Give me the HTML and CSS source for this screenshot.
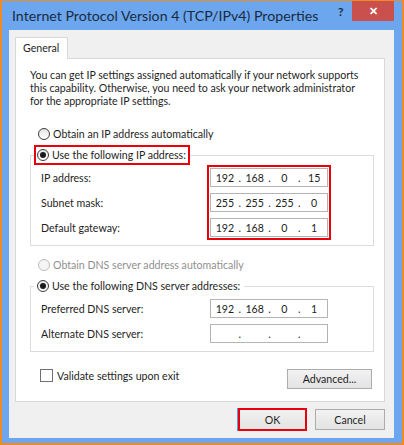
FILE: index.html
```html
<!DOCTYPE html>
<html lang="en">
<head>
  <meta charset="UTF-8" />
  <title>Internet Protocol Version 4 (TCP/IPv4) Properties</title>
  <link rel="stylesheet" href="styles.css">
</head>
<body>

  <div class="window">
    <div class="titlebar">
      <span class="title">Internet Protocol Version 4 (TCP/IPv4) Properties</span>
      <span class="help">?</span>
      <span class="close">&#x2715;</span>
    </div>

    <div class="dialog">
      <div class="tabs">
        <span class="tab">General</span>
      </div>

      <div class="panel">
        <p class="intro">You can get IP settings assigned automatically if your network supports<br>this capability. Otherwise, you need to ask your network administrator<br>for the appropriate IP settings.</p>

        <div class="option"><span class="radio"></span>Obtain an IP address automatically</div>

        <fieldset class="group">
          <legend class="legend mark"><span class="radio on"></span>Use the following IP address:</legend>
          <div class="rows">
            <div class="labels">
              <div class="label">IP address:</div>
              <div class="label">Subnet mask:</div>
              <div class="label">Default gateway:</div>
            </div>
            <div class="fields mark">
              <div class="ip"><span>192</span><i>.</i><span>168</span><i>.</i><span>0</span><i>.</i><span>15</span></div>
              <div class="ip"><span>255</span><i>.</i><span>255</span><i>.</i><span>255</span><i>.</i><span>0</span></div>
              <div class="ip"><span>192</span><i>.</i><span>168</span><i>.</i><span>0</span><i>.</i><span>1</span></div>
            </div>
          </div>
        </fieldset>

        <div class="option off"><span class="radio"></span>Obtain DNS server address automatically</div>

        <fieldset class="group">
          <legend class="legend"><span class="radio on"></span>Use the following DNS server addresses:</legend>
          <div class="rows">
            <div class="labels">
              <div class="label">Preferred DNS server:</div>
              <div class="label">Alternate DNS server:</div>
            </div>
            <div class="fields">
              <div class="ip"><span>192</span><i>.</i><span>168</span><i>.</i><span>0</span><i>.</i><span>1</span></div>
              <div class="ip"><span></span><i>.</i><span></span><i>.</i><span></span><i>.</i><span></span></div>
            </div>
          </div>
        </fieldset>

        <div class="footer-row">
          <label class="check"><span class="box"></span>Validate settings upon exit</label>
          <button class="btn advanced">Advanced...</button>
        </div>
      </div>

      <div class="actions">
        <button class="btn ok">OK</button>
        <button class="btn">Cancel</button>
      </div>
    </div>
  </div>

</body>
</html>
```

FILE: styles.css
```css
* {
  box-sizing: border-box;
}

body {
  margin: 0;
  font-family: Lato, 'Noto Sans', sans-serif;
  font-size: 10.6px;
  color: #1e1e1e;
}

.window {
  width: 404px;
  height: 445px;
  display: flex;
  flex-direction: column;
  background: #6ba6ee;
  border: 2px solid #f08a24;
  border-top-width: 1px;
  padding: 0 8px 5px 7px;
}

.titlebar {
  height: 29px;
  display: flex;
  align-items: flex-start;
}

.title {
  font-size: 14.2px;
  color: #1b2b3e;
  margin: 6px 0 0 3px;
  white-space: nowrap;
}

.help {
  margin: 3px 0 0 auto;
  font-size: 12px;
  font-weight: bold;
  color: #1b2b3e;
  width: 14px;
}

.close {
  width: 42px;
  height: 20px;
  background: #c9504c;
  color: #fff;
  font-size: 11px;
  font-weight: bold;
  display: flex;
  align-items: center;
  justify-content: center;
}

.dialog {
  flex: 1;
  background: #f0f0f0;
  padding: 7px 9px 6px 6px;
  display: flex;
  flex-direction: column;
}

.tabs {
  display: flex;
  height: 21px;
}

.tab {
  background: #fff;
  border: 1px solid #d9d9d9;
  border-bottom: none;
  padding: 4px 8px 0 7px;
  height: 22px;
  position: relative;
  z-index: 1;
}

.panel {
  background: #fff;
  border: 1px solid #d9d9d9;
  height: 344px;
  padding: 10px 10px 0 14px;
}

.intro {
  margin: 0;
  line-height: 13px;
  white-space: nowrap;
}

.option {
  display: flex;
  align-items: center;
  height: 20px;
  margin: 16px 0 0 8px;
}

.option.off {
  color: #8f8f8f;
  margin-top: 9px;
}

.radio {
  width: 12px;
  height: 12px;
  border-radius: 50%;
  border: 1px solid #3c3c3c;
  background: linear-gradient(#e6e6e6, #fff);
  margin-right: 3px;
  display: inline-flex;
  align-items: center;
  justify-content: center;
  flex-shrink: 0;
}

.off .radio {
  border-color: #bcbcbc;
  background: #f4f4f4;
}

.radio.on::after {
  content: "";
  width: 6px;
  height: 6px;
  border-radius: 50%;
  background: #1a1a1a;
}

.group {
  margin: 1px 0 0 0;
  border: 1px solid #dcdcdc;
  padding: 0 42px 5px 10px;
  min-width: 0;
}

.legend {
  display: flex;
  align-items: center;
  height: 20px;
  margin-left: -7px;
  padding: 0 2px 0 1px;
  border: 2px solid transparent;
}

.mark {
  border: 2px solid #e8000b;
}

.rows {
  display: flex;
  justify-content: space-between;
}

.labels,
.fields {
  display: flex;
  flex-direction: column;
  gap: 6px;
}

.fields {
  padding: 1px;
  border: 2px solid transparent;
}

.fields.mark {
  border-color: #e8000b;
}

.label {
  height: 19px;
  display: flex;
  align-items: center;
  margin-top: 3px;
}

.labels .label + .label {
  margin-top: 0;
}

.ip {
  width: 118px;
  height: 19px;
  border: 1px solid #b4b4b4;
  background: #fff;
  display: flex;
  align-items: center;
  padding: 0 0 0 1px;
}

.ip span {
  width: 26px;
  text-align: center;
}

.ip i {
  font-style: normal;
  width: 4px;
  text-align: center;
}

.footer-row {
  display: flex;
  justify-content: space-between;
  align-items: flex-start;
  margin: 16px 2px 0 10px;
}

.check {
  display: flex;
  align-items: center;
  height: 13px;
  margin-top: 1px;
}

.box {
  width: 13px;
  height: 13px;
  border: 1px solid #707070;
  background: #fff;
  margin-right: 4px;
}

.btn {
  font-family: inherit;
  font-size: 10.6px;
  color: #1e1e1e;
  background: linear-gradient(#f2f2f2, #e3e3e3);
  border: 1px solid #acacac;
  height: 20px;
  padding: 0;
}

.advanced {
  width: 85px;
  margin-top: 1px;
}

.actions {
  display: flex;
  justify-content: flex-end;
  gap: 8px;
  margin-top: 7px;
}

.actions .btn {
  width: 70px;
  height: 21px;
}

.actions .ok {
  width: 69px;
  height: 23px;
  margin-top: -1px;
  border: 2px solid #e8000b;
  box-shadow: -1px 0 0 #5aa0e6;
}
```
